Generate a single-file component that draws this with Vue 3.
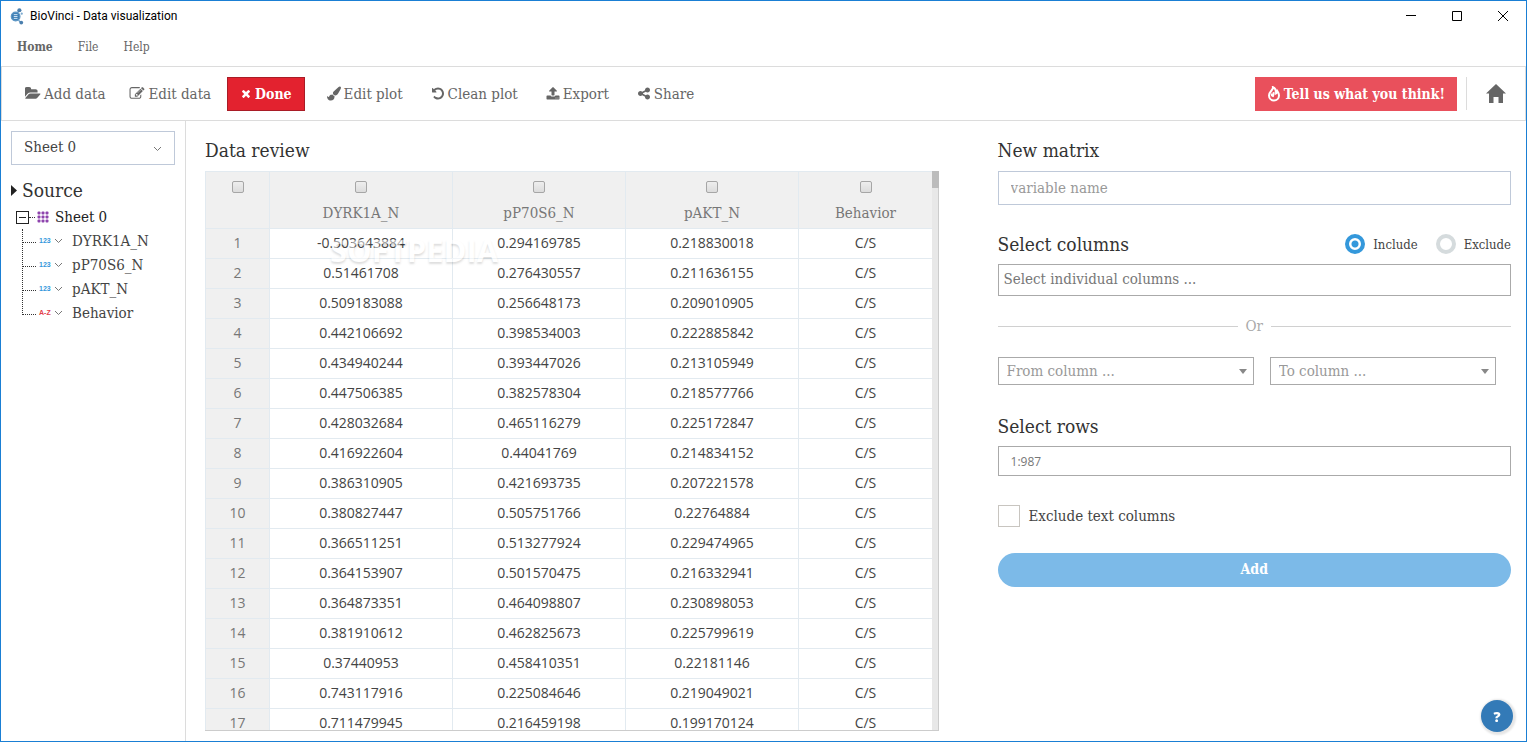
<template>
  <div class="window">
    <header class="titlebar">
      <svg class="logo" viewBox="0 0 16 18">
        <g fill="none" stroke="#5b95c4" stroke-width="1.3">
          <circle cx="6" cy="9" r="4.6" fill="#3e7fb5" />
          <path d="M8 5l2.500-3M9 13l3 2.500" />
        </g>
        <circle cx="10" cy="2.300" r="2.200" fill="#4a7fae" />
        <circle cx="12.500" cy="6" r="1.200" fill="#7aa9cf" />
        <circle cx="12" cy="15.500" r="2" fill="#4a7fae" />
        <path d="M4 7h4M4 9h4M4 11h4" stroke="#d9eaf7" stroke-width="1" />
      </svg>
      <span class="title">BioVinci - Data visualization</span>
      <div class="window-buttons">
        <button aria-label="Minimize"><svg viewBox="0 0 12 12"><path d="M1 5.500h10" /></svg></button>
        <button aria-label="Maximize"><svg viewBox="0 0 12 12"><path d="M1.500 1.500h9v9h-9z" /></svg></button>
        <button aria-label="Close"><svg viewBox="0 0 12 12"><path d="M1 1l10 10M11 1L1 11" /></svg></button>
      </div>
    </header>

    <nav class="menu">
      <a href="#" class="current">Home</a>
      <a href="#">File</a>
      <a href="#">Help</a>
    </nav>

    <div class="toolbar">
      <button v-for="tool in tools" :key="tool.label" :class="['tool', { done: tool.done }]">
        <svg :viewBox="tool.box || '0 0 1792 1792'"><path :d="tool.icon" /></svg>
        <span>{{ tool.label }}</span>
      </button>
      <button class="feedback">
        <svg viewBox="0 0 14 16">
          <path d="M6 1.200C6.500 4 2 5.500 2 9.500a5 5 0 0 0 10 0c0-2-.8-3.200-1.500-4.200-.2 1-.6 1.700-1.400 2.100C9.300 4.500 8.300 2.300 6 1.200z" />
          <path d="M4.500 7.500c0 1.500.5 2.300 1.500 2.600.8-1 1-2.300.5-4" />
        </svg>
        <span>Tell us what you think!</span>
      </button>
      <a href="#" class="home" aria-label="Home">
        <svg viewBox="0 0 20 20"><path d="M10 0l10 9.500h-3V19h-4.500v-6h-5v6H3V9.500H0z" /></svg>
      </a>
    </div>

    <div class="content">
      <aside class="sidebar">
        <div class="select-box sheet-select">
          <select v-model="sheet" aria-label="Sheet">
            <option>Sheet 0</option>
          </select>
          <svg class="chevron" viewBox="0 0 9 6"><path d="M1 1l3.500 3.500L8 1" /></svg>
        </div>
        <h2 class="source"><svg viewBox="0 0 6 11"><path d="M0 0l6 5.500L0 11z" /></svg>Source</h2>
        <div class="root">
          <button class="toggle" aria-label="Collapse" @click="open = !open"></button>
          <span class="dots"></span>
          <svg class="grid-icon" viewBox="0 0 12 12">
            <template v-for="y in 3" :key="y">
              <rect v-for="x in 3" :key="x" :x="(x - 1) * 4 + 0.5" :y="(y - 1) * 4 + 0.5" width="3" height="3" rx="1" />
            </template>
          </svg>
          <span>Sheet 0</span>
        </div>
        <ul v-if="open" class="tree">
          <li v-for="col in columns" :key="col.name">
            <span :class="['type', { text: col.text }]">{{ col.text ? 'A-Z' : '123' }}</span>
            <svg class="chevron" viewBox="0 0 9 6"><path d="M1 1l3.500 3.500L8 1" /></svg>
            <span>{{ col.name }}</span>
          </li>
        </ul>
      </aside>

      <main class="main">
        <section class="review">
          <h2>Data review</h2>
          <div class="table-wrap">
            <div class="table-view">
              <table>
                <colgroup>
                  <col class="c-index" /><col class="c-first" /><col class="c-mid" /><col class="c-mid" /><col class="c-last" />
                </colgroup>
                <thead>
                  <tr>
                    <th><input type="checkbox" aria-label="Select all" /></th>
                    <th v-for="col in columns" :key="col.name">
                      <label><input type="checkbox" />{{ col.name }}</label>
                    </th>
                  </tr>
                </thead>
                <tbody>
                  <tr v-for="(row, i) in rows" :key="i">
                    <th>{{ i + 1 }}</th>
                    <td v-for="(value, j) in row" :key="j">{{ value }}</td>
                    <td>C/S</td>
                  </tr>
                </tbody>
              </table>
            </div>
            <div class="scrollbar"><div class="thumb"></div></div>
            <span class="watermark">SOFTPEDIA</span>
          </div>
        </section>

        <form class="matrix" @submit.prevent>
          <h2>New matrix</h2>
          <input v-model="name" class="name" type="text" placeholder="variable name" aria-label="variable name" />

          <div class="columns-head">
            <h2>Select columns</h2>
            <label><input v-model="mode" type="radio" value="include" />Include</label>
            <label><input v-model="mode" type="radio" value="exclude" />Exclude</label>
          </div>
          <input class="individual" type="text" placeholder="Select individual columns ..." aria-label="Select individual columns" />

          <div class="or">Or</div>

          <div class="range">
            <div class="select-box from">
              <select aria-label="From column"><option>From column ...</option></select>
              <svg class="caret" viewBox="0 0 8 5"><path d="M0 0h8L4 5z" /></svg>
            </div>
            <div class="select-box to">
              <select aria-label="To column"><option>To column ...</option></select>
              <svg class="caret" viewBox="0 0 8 5"><path d="M0 0h8L4 5z" /></svg>
            </div>
          </div>

          <h2>Select rows</h2>
          <input class="rows" type="text" placeholder="1:987" aria-label="Select rows" />

          <label class="exclude-text"><input type="checkbox" />Exclude text columns</label>
          <button class="add">Add</button>
        </form>
      </main>
    </div>
    <button class="help">?</button>
  </div>
</template>

<script setup>
import { ref } from 'vue'

const sheet = ref('Sheet 0')
const open = ref(true)
const name = ref('')
const mode = ref('include')

const tools = [
  { label: 'Add data', box: '0 0 1856 1792', icon: 'M1815 952q0 31-31 66l-336 396q-43 51-120.500 86.500t-143.500 35.500h-1088q-34 0-60.500-13t-26.500-43q0-31 31-66l336-396q43-51 120.500-86.500t143.500-35.500h1088q34 0 60.500 13t26.500 43zm-343-344v160h-832q-94 0-197 47.500t-164 119.500l-337 396-5 6q0-4-.5-12.500t-.5-12.500v-960q0-92 66-158t158-66h320q92 0 158 66t66 158v32h544q92 0 158 66t66 158z' },
  { label: 'Edit data', icon: 'M888 1184l116-116-152-152-116 116v56h96v96h56zm440-720q-16-16-33 1l-350 350q-17 17-1 33t33-1l350-350q17-17 1-33zm80 594v190q0 119-84.500 203.500t-203.500 84.500h-832q-119 0-203.500-84.500t-84.500-203.500v-832q0-119 84.500-203.500t203.500-84.500h832q63 0 117 25 15 7 18 23 3 17-9 29l-49 49q-14 14-32 8-23-6-45-6h-832q-66 0-113 47t-47 113v832q0 66 47 113t113 47h832q66 0 113-47t47-113v-126q0-13 9-22l64-64q15-15 35-7t20 29zm-96-738l288 288-672 672h-288v-288zm444 132l-92 92-288-288 92-92q28-28 68-28t68 28l152 152q28 28 28 68t-28 68z' },
  { label: 'Done', done: true, icon: 'M1490 1322q0 40-28 68l-136 136q-28 28-68 28t-68-28l-294-294-294 294q-28 28-68 28t-68-28l-136-136q-28-28-28-68t28-68l294-294-294-294q-28-28-28-68t28-68l136-136q28-28 68-28t68 28l294 294 294-294q28-28 68-28t68 28l136 136q28 28 28 68t-28 68l-294 294 294 294q28 28 28 68z' },
  { label: 'Edit plot', icon: 'M1615 0q70 0 122.500 46.500t52.500 116.500q0 63-45 151-332 629-465 752-97 91-218 91-126 0-216.500-92.500t-90.500-219.500q0-128 92-212l638-579q59-54 130-54zm-909 1034q39 76 106.500 130t150.500 76l1 71q4 213-129.500 347t-348.500 134q-123 0-218-46.500t-152.500-127.500-86.500-183-29-220q7 5 41 30t62 44.500 59 36.500 46 17q41 0 55-37 25-66 57.500-112.500t69.500-76 88-47.500 103-25.500 125-10.500z' },
  { label: 'Clean plot', icon: 'M1664 896q0 156-61 298t-164 245-245 164-298 61q-172 0-327-72.500t-264-204.500q-7-10-6.500-22.500t8.500-20.500l137-138q10-9 25-9 16 2 23 12 73 95 179 147t225 52q104 0 198.500-40.500t163.500-109.500 109.500-163.500 40.500-198.500-40.500-198.500-109.500-163.500-163.500-109.500-198.500-40.500q-98 0-188 35.500t-160 101.500l137 138q31 30 14 69-17 40-59 40h-448q-26 0-45-19t-19-45v-448q0-42 40-59 39-17 69 14l130 129q107-101 244.500-156.500t284.500-55.500q156 0 298 61t245 164 164 245 61 298z' },
  { label: 'Export', icon: 'M1344 1472q0-26-19-45t-45-19-45 19-19 45 19 45 45 19 45-19 19-45zm256 0q0-26-19-45t-45-19-45 19-19 45 19 45 45 19 45-19 19-45zm128-224v320q0 40-28 68t-68 28h-1472q-40 0-68-28t-28-68v-320q0-40 28-68t68-28h427q21 56 70.500 92t110.500 36h256q61 0 110.500-36t70.500-92h427q40 0 68 28t28 68zm-325-648q-17 40-59 40h-256v448q0 26-19 45t-45 19h-256q-26 0-45-19t-19-45v-448h-256q-42 0-59-40-17-39 14-69l448-448q18-19 45-19t45 19l448 448q31 30 14 69z' },
  { label: 'Share', icon: 'M1344 1024q133 0 226.500 93.500t93.500 226.500-93.500 226.500-226.500 93.500-226.500-93.500-93.500-226.500q0-12 2-34l-360-180q-92 86-218 86-133 0-226.500-93.500t-93.500-226.500 93.500-226.500 226.500-93.500q126 0 218 86l360-180q-2-22-2-34 0-133 93.500-226.500t226.500-93.500 226.500 93.500 93.500 226.500-93.500 226.500-226.500 93.500q-126 0-218-86l-360 180q2 22 2 34t-2 34l360 180q92-86 218-86z' }
]

const columns = [
  { name: 'DYRK1A_N' },
  { name: 'pP70S6_N' },
  { name: 'pAKT_N' },
  { name: 'Behavior', text: true }
]

const rows = [
  ['-0.503643884', '0.294169785', '0.218830018'],
  ['0.51461708', '0.276430557', '0.211636155'],
  ['0.509183088', '0.256648173', '0.209010905'],
  ['0.442106692', '0.398534003', '0.222885842'],
  ['0.434940244', '0.393447026', '0.213105949'],
  ['0.447506385', '0.382578304', '0.218577766'],
  ['0.428032684', '0.465116279', '0.225172847'],
  ['0.416922604', '0.44041769', '0.214834152'],
  ['0.386310905', '0.421693735', '0.207221578'],
  ['0.380827447', '0.505751766', '0.22764884'],
  ['0.366511251', '0.513277924', '0.229474965'],
  ['0.364153907', '0.501570475', '0.216332941'],
  ['0.364873351', '0.464098807', '0.230898053'],
  ['0.381910612', '0.462825673', '0.225799619'],
  ['0.37440953', '0.458410351', '0.22181146'],
  ['0.743117916', '0.225084646', '0.219049021'],
  ['0.711479945', '0.216459198', '0.199170124']
]
</script>

<style>
body {
  margin: 0;
}
</style>

<style scoped>
.window {
  box-sizing: border-box;
  display: flex;
  flex-direction: column;
  height: 100vh;
  border: 1px solid #1a7fd4;
  background: #fff;
  color: #444;
  font-family: "DejaVu Serif Condensed", "DejaVu Serif", serif;
  font-size: 15px;
}
.window * {
  box-sizing: border-box;
}
button, input, select {
  font: inherit;
  color: inherit;
  border-radius: 0;
  margin: 0;
}
button {
  border: none;
  background: none;
  padding: 0;
  cursor: pointer;
}
h2 {
  margin: 0;
  font-size: 19px;
  font-weight: normal;
  line-height: 24px;
  color: #333;
}
.titlebar {
  display: flex;
  align-items: center;
  height: 30px;
  padding-left: 9px;
  color: #000;
  font-family: Roboto, sans-serif;
  font-size: 12px;
}
.logo {
  width: 15px;
  height: 17px;
  margin-right: 5px;
}
.window-buttons {
  display: flex;
  margin-left: auto;
}
.window-buttons button {
  display: flex;
  align-items: center;
  justify-content: center;
  width: 46px;
  height: 28px;
}
.window-buttons svg {
  width: 12px;
  height: 12px;
  fill: none;
  stroke: #000;
}
.menu {
  display: flex;
  align-items: center;
  gap: 25px;
  height: 35px;
  padding: 0 16px 4px;
  font-size: 12px;
}
.menu a {
  color: #666;
  text-decoration: none;
}
.menu .current {
  font-weight: bold;
}
.toolbar {
  display: flex;
  align-items: center;
  height: 55px;
  padding: 0 19px 0 11px;
  border: 1px solid #dcdcdc;
  color: #666;
}
.tool {
  display: flex;
  align-items: center;
  gap: 3px;
  height: 34px;
  padding: 0 12px;
  white-space: nowrap;
}
.tool svg {
  width: 16px;
  height: 15px;
  fill: currentColor;
}
.done ~ .tool {
  padding: 0 14px;
}
.done ~ .tool svg {
  width: 14px;
}
.tool.done {
  margin: 0 8px 0 4px;
  border: 1px solid #a91c26;
  background: #e3222f;
  color: #fff;
  font-size: 14px;
  font-weight: bold;
}
.done svg {
  width: 12px;
}
.feedback {
  display: flex;
  align-items: center;
  gap: 3px;
  height: 34px;
  margin-left: auto;
  padding: 0 12px;
  background: #e9505c;
  color: #fff;
  font-size: 14px;
  font-weight: bold;
}
.feedback svg {
  width: 14px;
  height: 16px;
  fill: none;
  stroke: #fff;
  stroke-width: 2;
}
.home {
  display: flex;
  align-items: center;
  height: 33px;
  margin-left: 9px;
  padding-left: 19px;
  border-left: 1px solid #dcdcdc;
}
.home svg {
  width: 20px;
  height: 20px;
  fill: #666;
}
.content {
  display: flex;
  flex: 1;
  min-height: 0;
}
.sidebar {
  flex: none;
  width: 185px;
  padding: 10px;
  border-right: 1px solid #dcdcdc;
}
.select-box {
  position: relative;
}
.select-box select {
  appearance: none;
  width: 100%;
  height: 28px;
  padding: 0 8px;
  border: 1px solid #aaa;
  background: #fff;
  color: #999;
}
.select-box svg {
  position: absolute;
  right: 7px;
  top: 12px;
  pointer-events: none;
}
.caret {
  width: 8px;
  height: 5px;
  fill: #888;
}
.chevron {
  width: 9px;
  height: 6px;
  fill: none;
  stroke: #777;
}
.sheet-select select {
  height: 34px;
  padding: 0 12px 2px;
  border-color: #bfc9d9;
  color: #444;
}
.sheet-select .chevron {
  right: 13px;
  top: 15px;
}
.source {
  display: flex;
  align-items: center;
  gap: 5px;
  margin-top: 13px;
}
.source svg {
  width: 6px;
  height: 11px;
  fill: #222;
}
.root {
  display: flex;
  align-items: center;
  height: 24px;
  margin-top: 3px;
  padding-left: 5px;
  color: #222;
}
.toggle {
  display: flex;
  align-items: center;
  justify-content: center;
  width: 13px;
  height: 13px;
  border: 1px solid #222;
}
.toggle::before {
  content: "";
  width: 7px;
  border-top: 1px solid #222;
}
.dots {
  width: 6px;
  margin-right: 2px;
  border-top: 1px dotted #333;
}
.grid-icon {
  width: 12px;
  height: 12px;
  margin-right: 6px;
  fill: #8e44ad;
}
.tree {
  margin: 0 0 0 11px;
  padding: 0;
  list-style: none;
}
.tree li {
  display: flex;
  align-items: center;
  height: 24px;
}
.tree li::before {
  content: "";
  align-self: flex-start;
  width: 13px;
  height: 13px;
  margin-right: 3px;
  border-left: 1px dotted #333;
  border-bottom: 1px dotted #333;
}
.tree li + li::before {
  height: 24px;
  margin-top: -11px;
}
.type {
  width: 15px;
  color: #3498db;
  font: bold 7px/10px "Liberation Sans", sans-serif;
}
.type.text {
  color: #e3404c;
}
.tree .chevron {
  margin-right: 9px;
}
.main {
  display: grid;
  grid-template-columns: minmax(0, 10fr) minmax(0, 7fr);
  grid-template-rows: minmax(0, 1fr);
  gap: 59px;
  flex: 1;
  min-width: 0;
  padding: 17px 15px 10px 19px;
}
.review {
  display: flex;
  flex-direction: column;
  min-height: 0;
}
.table-wrap {
  position: relative;
  display: flex;
  flex: 1;
  min-height: 0;
  margin-top: 9px;
  border-bottom: 1px solid #ccc;
}
.table-view {
  flex: 1;
  overflow: hidden;
}
table {
  width: 100%;
  table-layout: fixed;
  border-collapse: collapse;
}
.c-index {
  width: 64px;
}
.c-first {
  width: 183px;
}
.c-mid {
  width: 173px;
}
.c-last {
  width: 134px;
}
th, td {
  height: 30px;
  padding: 0 0 2px;
  border: 1px solid #e2eaf0;
  text-align: center;
  font-family: "Open Sans", sans-serif;
  font-size: 14px;
}
th {
  background: #f0f0f0;
  color: #777;
  font-weight: normal;
}
thead th {
  height: 57px;
  padding: 9px 0 0;
  vertical-align: top;
  font-family: inherit;
  font-size: 15px;
}
thead label {
  display: flex;
  flex-direction: column;
  align-items: center;
  gap: 11px;
  line-height: 18px;
}
thead input {
  appearance: none;
  display: block;
  width: 12px;
  height: 12px;
  margin: 0 auto;
  border: 1px solid #a6a6a6;
  border-radius: 2px;
  background: linear-gradient(#eee, #dcdcdc);
}
.scrollbar {
  width: 7px;
  border-right: 1px solid #ccc;
  background: #e8e8e8;
}
.thumb {
  width: 7px;
  height: 17px;
  background: #bcbcbc;
}
.watermark {
  position: absolute;
  left: 125px;
  top: 62px;
  color: #fff;
  font: bold 31px/34px "Open Sans", sans-serif;
  text-shadow: 0 2px 2px rgba(0, 0, 0, 0.25);
  opacity: 0.5;
  pointer-events: none;
}
.matrix {
  display: flex;
  flex-direction: column;
}
.matrix input[type="text"] {
  width: 100%;
  border: 1px solid #aaa;
  background: #fff;
}
.matrix input::placeholder {
  color: #777;
  opacity: 1;
}
.matrix input.name {
  height: 34px;
  margin: 9px 0 27px;
  padding: 0 12px;
  border-color: #bfc9d9;
}
.matrix .name::placeholder {
  color: #999;
}
.columns-head {
  display: flex;
  align-items: center;
  gap: 18px;
}
.columns-head h2 {
  flex: 1;
}
.columns-head label {
  display: flex;
  align-items: center;
  gap: 8px;
  font-size: 13px;
}
.columns-head input {
  appearance: none;
  width: 20px;
  height: 20px;
  border: 4px solid #d5dbdd;
  border-radius: 50%;
}
.columns-head input:checked {
  border-color: #3498db;
  background: radial-gradient(circle, #3498db 3px, #fff 4px);
}
.matrix .individual {
  height: 32px;
  margin-top: 8px;
  padding: 0 5px 2px;
}
.or {
  display: flex;
  align-items: center;
  gap: 8px;
  margin-top: 20px;
  line-height: 20px;
  color: #aaa;
}
.or::before, .or::after {
  content: "";
  flex: 1;
  border-top: 1px solid #d0d0d0;
}
.range {
  display: flex;
  gap: 16px;
  margin: 21px 15px 29px 0;
}
.from {
  flex: 17;
}
.to {
  flex: 15;
}
.matrix .rows {
  height: 30px;
  margin-top: 8px;
  padding: 0 12px;
  font-family: "Open Sans", sans-serif;
  font-size: 12px;
}
.exclude-text {
  display: flex;
  align-items: center;
  gap: 9px;
  margin-top: 29px;
}
.exclude-text input {
  appearance: none;
  width: 22px;
  height: 22px;
  border: 1px solid #c8c5c0;
}
.add {
  height: 34px;
  margin-top: 26px;
  padding-bottom: 2px;
  border-radius: 17px;
  background: #7cbae8;
  color: #fff;
  font-size: 14px;
  font-weight: bold;
}
.help {
  position: fixed;
  right: 14px;
  bottom: 10px;
  width: 32px;
  height: 32px;
  border-radius: 50%;
  background: #337ab7;
  box-shadow: 1px 1px 2px 2px rgba(0, 0, 0, 0.1);
  color: #fff;
  font-family: "Open Sans", sans-serif;
  font-size: 14px;
  font-weight: 800;
}
</style>
